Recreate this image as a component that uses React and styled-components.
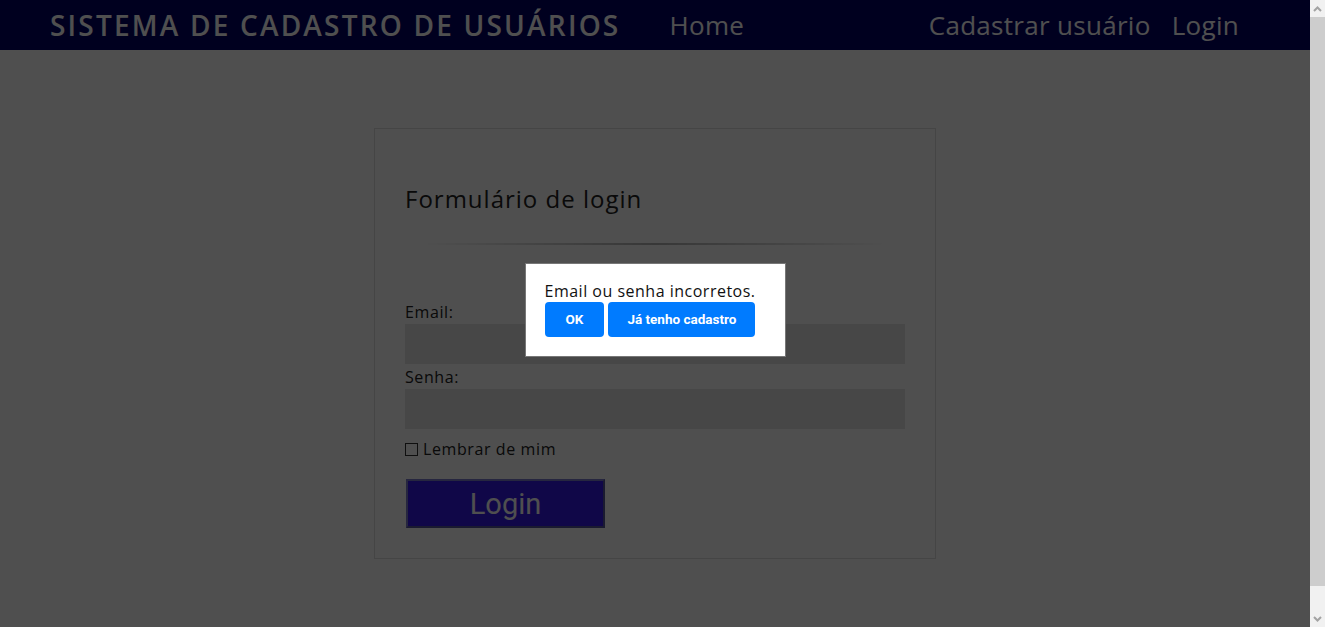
import React from "react";
import { styled, createGlobalStyle } from "styled-components";

const GlobalStyle = createGlobalStyle`
    html, body {
        margin: 0;
        padding: 0;
        background: #ffffff;
        font-family: "Open Sans", "Noto Sans", sans-serif;
    }
    body { padding-right: 15px; }
    * { box-sizing: border-box; }
`

const Header = styled.header`
    height: 50px;
    background: #000066;
    display: flex;
    align-items: center;
    padding: 0 71px 0 50px;
    color: #ffffff;`

const Brand = styled.div`
    font-size: 28px;
    font-weight: 600;
    letter-spacing: 2.2px;
    margin-right: 49px;
    white-space: nowrap;`

const NavLink = styled.a`
    font-size: 26px;
    letter-spacing: 0.3px;
    color: #ffffff;
    text-decoration: none;
    margin-left: ${(p) => p.$gap || 0}px;
    white-space: nowrap;`

const Spacer = styled.div`
    flex: 1;`

const Main = styled.main`
    display: flex;
    justify-content: center;
    padding: 78px 0 92px;`

const Card = styled.section`
    width: 562px;
    border: 1px solid #dddddd;
    padding: 53px 30px 30px;`

const Title = styled.h2`
    margin: 0;
    font-size: 24px;
    letter-spacing: 1px;
    font-weight: 400;
    color: #222222;`

const Divider = styled.hr`
    border: 0;
    height: 2px;
    margin: 28px 15px 57px 15px;
    background: linear-gradient(to right, rgba(0,0,0,0), rgba(0,0,0,0.3), rgba(0,0,0,0));`

const Label = styled.label`
    display: block;
    font-size: 16px;
    line-height: 20px;
    letter-spacing: 0.6px;
    color: #222222;
    margin-bottom: 2px;`

const Input = styled.input`
    display: block;
    width: 500px;
    height: 40px;
    border: 0;
    background: #e4e4e4;
    margin: 0 0 3px;`

const CheckRow = styled.label`
    display: flex;
    align-items: center;
    gap: 5px;
    font-size: 16px;
    line-height: 20px;
    letter-spacing: 0.6px;
    color: #222222;
    margin-top: 10px;`

const Box = styled.span`
    width: 13px;
    height: 13px;
    border: 1px solid #333333;
    background: #ffffff;`

const LoginButton = styled.button`
    display: block;
    margin: 20px 0 0 1px;
    width: 199px;
    height: 49px;
    background: #3618e8;
    color: #ffffff;
    font-family: Roboto, "Liberation Sans", sans-serif;
    font-size: 29px;
    border: 2px solid;
    border-color: #7a7acc #55559a #55559a #7a7acc;`

const Backdrop = styled.div`
    position: fixed;
    top: 0;
    bottom: 0;
    left: 0;
    right: 15px;
    background: rgba(0, 0, 0, 0.69);
    display: flex;
    align-items: center;
    justify-content: center;`

const Dialog = styled.div`
    width: 261px;
    margin-top: -8px;
    background: #ffffff;
    border: 1px solid #777777;
    padding: 20px 19px 19px;`

const Message = styled.div`
    font-size: 16px;
    letter-spacing: 0.5px;
    color: #111111;
    line-height: 14px;
    margin-bottom: 4px;`

const Actions = styled.div`
    display: flex;
    gap: 4px;`

const DialogButton = styled.button`
    height: 35px;
    padding: 0 ${(p) => p.$pad}px;
    background: #007bff;
    color: #ffffff;
    border: 0;
    border-radius: 4px;
    font-family: Roboto, "Liberation Sans", sans-serif;
    font-weight: 700;
    font-size: 13.5px;`

// browser scrollbar as seen in the screenshot
const Rail = styled.div`
    position: fixed;
    top: 0;
    right: 0;
    width: 15px;
    height: 100vh;
    background: #f1f1f1;
    display: flex;
    flex-direction: column;`

const RailButton = styled.div`
    height: 17px;
    display: flex;
    align-items: center;
    justify-content: center;`

const Track = styled.div`
    flex: 1;
    display: flex;
    flex-direction: column;`

const Thumb = styled.div`
    height: 569px;
    background: #cdcdcd;`

function Arrow({ down })
{
    return (
        <svg width="9" height="6" viewBox="0 0 9 6">
            <path
                d={down ? "M1 1 L4.5 4.5 L8 1" : "M1 5 L4.5 1.5 L8 5"}
                fill="none"
                stroke="#a3a3a3"
                strokeWidth="2"
            />
        </svg>
    );
}

export default function App()
{
    return (
        <>
            <GlobalStyle />
            <Header>
                <Brand>SISTEMA DE CADASTRO DE USUÁRIOS</Brand>
                <NavLink href="#">Home</NavLink>
                <Spacer />
                <NavLink href="#">Cadastrar usuário</NavLink>
                <NavLink href="#" $gap={21}>Login</NavLink>
            </Header>
            <Main>
                <Card>
                    <Title>Formulário de login</Title>
                    <Divider />
                    <Label>Email:</Label>
                    <Input type="email" />
                    <Label>Senha:</Label>
                    <Input type="password" />
                    <CheckRow><Box />Lembrar de mim</CheckRow>
                    <LoginButton>Login</LoginButton>
                </Card>
            </Main>
            <Backdrop>
                <Dialog>
                    <Message>Email ou senha incorretos.</Message>
                    <Actions>
                        <DialogButton $pad={21}>OK</DialogButton>
                        <DialogButton $pad={19}>Já tenho cadastro</DialogButton>
                    </Actions>
                </Dialog>
            </Backdrop>
            <Rail>
                <RailButton><Arrow /></RailButton>
                <Track><Thumb /></Track>
                <RailButton><Arrow down /></RailButton>
            </Rail>
        </>
    );
}
